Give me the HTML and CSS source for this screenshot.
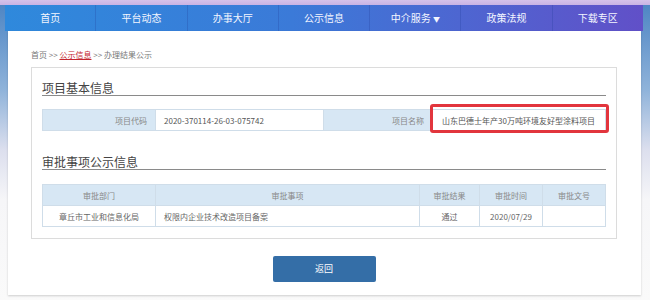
FILE: index.html
```html
<!DOCTYPE html>
<html lang="zh-CN">
<head>
    <meta charset="UTF-8">
    <title>办理结果公示</title>
    <link rel="stylesheet" href="styles.css">
</head>
<body>
    <div class="page">
        <nav class="nav">
            <a href="#">首页</a>
            <a href="#">平台动态</a>
            <a href="#">办事大厅</a>
            <a href="#">公示信息</a>
            <a href="#">中介服务 <span class="caret">▼</span></a>
            <a href="#">政策法规</a>
            <a href="#">下载专区</a>
        </nav>
        <div class="panel">
            <div class="crumb">
                <a href="#">首页</a> &gt;&gt; <a href="#" class="current">公示信息</a> &gt;&gt; 办理结果公示
            </div>
            <div class="box">
                <h2>项目基本信息</h2>
                <table class="info">
                    <colgroup>
                        <col style="width:113px">
                        <col style="width:168px">
                        <col style="width:109px">
                        <col>
                    </colgroup>
                    <tr>
                        <th>项目代码</th>
                        <td>2020-370114-26-03-075742</td>
                        <th>项目名称</th>
                        <td class="marked">山东巴德士年产30万吨环境友好型涂料项目</td>
                    </tr>
                </table>
                <h2 class="second">审批事项公示信息</h2>
                <table class="list">
                    <colgroup>
                        <col style="width:113px">
                        <col>
                        <col style="width:60px">
                        <col style="width:63px">
                        <col style="width:63px">
                    </colgroup>
                    <tr>
                        <th>审批部门</th>
                        <th>审批事项</th>
                        <th>审批结果</th>
                        <th>审批时间</th>
                        <th>审批文号</th>
                    </tr>
                    <tr>
                        <td>章丘市工业和信息化局</td>
                        <td class="left">权限内企业技术改造项目备案</td>
                        <td>通过</td>
                        <td>2020/07/29</td>
                        <td></td>
                    </tr>
                </table>
            </div>
            <div class="actions">
                <button class="button">返回</button>
            </div>
        </div>
    </div>
</body>
</html>
```

FILE: styles.css
```css
body {
    margin: 0;
    font-family: "Noto Sans CJK SC", "Noto Sans", sans-serif;
    color: #333;
}
.page {
    width: 650px;
    height: 300px;
    padding-top: 5px;
    box-sizing: border-box;
    background: linear-gradient(180deg, #d6c2ea 0, #c9b3e4 5px, #4f86c4 5px, #8fb3da 90px, #dcdfee 150px, #f6f6f8 200px, #fafafa 300px);
}
.nav {
    display: flex;
    height: 26px;
    margin: 0 7px 0 5px;
    background: linear-gradient(90deg, #2f89dc 0%, #3b7ad8 45%, #5063d0 75%, #6150c8 100%);
}
.nav a {
    flex: 1;
    color: #f4f6ff;
    font-size: 10px;
    line-height: 26px;
    text-align: center;
    text-decoration: none;
    border-left: 1px solid rgba(30, 60, 150, 0.25);
}
.nav a:first-child {
    border-left: none;
}
.nav .caret {
    font-size: 7px;
}
.panel {
    margin: 0 9px 0 8px;
    padding: 18px 24px 13px 23px;
    background: #fff;
    box-shadow: 0 1px 2px rgba(0, 0, 0, 0.18);
}
.crumb {
    font-size: 8px;
    line-height: 12px;
    color: #777;
    margin-bottom: 6px;
}
.crumb a {
    color: #777;
    text-decoration: none;
}
.crumb a.current {
    color: #c4262e;
    text-decoration: underline;
}
.box {
    border: 1px solid #dcdcdc;
    padding: 13px 10px 11px 10px;
}
.box h2 {
    margin: 0;
    font-size: 12px;
    font-weight: normal;
    line-height: 14px;
    color: #444;
    border-bottom: 1px solid #8a8a8a;
}
.box h2.second {
    margin-top: 24px;
}
table {
    width: 100%;
    border-collapse: collapse;
    table-layout: fixed;
    font-size: 8px;
    color: #666;
}
.info {
    margin-top: 13px;
}
.info th,
.info td {
    height: 20px;
    padding: 0 8px;
    border: 1px solid #cfdde9;
    white-space: nowrap;
}
.info th {
    background: #d7e7f4;
    font-weight: normal;
    text-align: right;
    color: #888;
}
.info td {
    text-align: left;
    color: #555;
}
.info td.marked {
    position: relative;
    padding-left: 9px;
}
.info td.marked::after {
    content: "";
    position: absolute;
    left: -3px;
    right: -4px;
    top: -6px;
    bottom: -3px;
    border: 3px solid #e2353d;
    border-radius: 3px;
}
.list {
    margin-top: 14px;
}
.list th,
.list td {
    height: 20px;
    padding: 0 8px;
    border: 1px solid #cfdde9;
    text-align: center;
    white-space: nowrap;
}
.list th {
    background: #d7e7f4;
    font-weight: normal;
    color: #888;
}
.list td.left {
    text-align: left;
}
.actions {
    margin-top: 14px;
    text-align: center;
}
.button {
    width: 103px;
    height: 26px;
    border: none;
    border-radius: 2px;
    background-color: #346ea7;
    color: #fff;
    font-family: "Noto Sans CJK SC", sans-serif;
    font-size: 9px;
    cursor: pointer;
}
```
